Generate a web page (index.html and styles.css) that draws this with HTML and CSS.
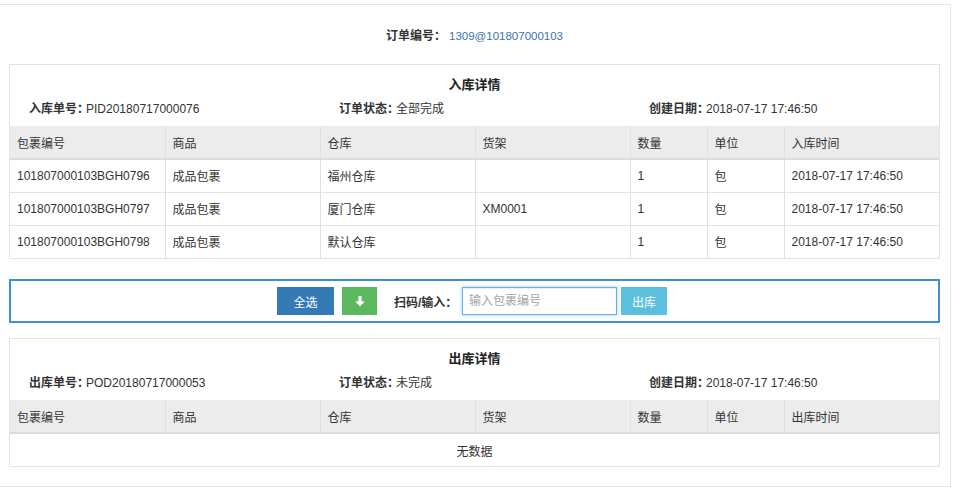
FILE: index.html
```html
<!DOCTYPE html>
<html lang="zh-CN">
<head>
<meta charset="utf-8">
<title>订单详情</title>
<link rel="stylesheet" href="styles.css">
</head>
<body>
<div class="page">
  <div class="order"><b>订单编号：</b><span class="order-no">1309@101807000103</span></div>

  <section class="panel">
    <h3 class="panel-title">入库详情</h3>
    <div class="info">
      <div><b>入库单号：</b>PID20180717000076</div>
      <div><b>订单状态：</b>全部完成</div>
      <div><b>创建日期：</b>2018-07-17 17:46:50</div>
    </div>
    <table class="grid">
      <colgroup><col class="w2"><col class="w2"><col class="w2"><col class="w2"><col class="w1"><col class="w1"><col class="w2"></colgroup>
      <thead>
        <tr><th>包裹编号</th><th>商品</th><th>仓库</th><th>货架</th><th>数量</th><th>单位</th><th>入库时间</th></tr>
      </thead>
      <tbody>
        <tr><td>101807000103BGH0796</td><td>成品包裹</td><td>福州仓库</td><td></td><td>1</td><td>包</td><td>2018-07-17 17:46:50</td></tr>
        <tr><td>101807000103BGH0797</td><td>成品包裹</td><td>厦门仓库</td><td>XM0001</td><td>1</td><td>包</td><td>2018-07-17 17:46:50</td></tr>
        <tr><td>101807000103BGH0798</td><td>成品包裹</td><td>默认仓库</td><td></td><td>1</td><td>包</td><td>2018-07-17 17:46:50</td></tr>
      </tbody>
    </table>
  </section>

  <div class="actions">
    <button class="btn btn-primary btn-all">全选</button>
    <button class="btn btn-success btn-down" aria-label="下载">
      <svg width="10" height="11" viewBox="0 0 10 11"><path d="M3.4 0h3.2v5.6h3.2L5 10.6 0.2 5.6h3.2z" fill="#fff"/></svg>
    </button>
    <label class="scan-label" for="scan">扫码/输入：</label>
    <input id="scan" class="scan-input" type="text" placeholder="输入包裹编号">
    <button class="btn btn-info btn-out">出库</button>
  </div>

  <section class="panel">
    <h3 class="panel-title">出库详情</h3>
    <div class="info">
      <div><b>出库单号：</b>POD20180717000053</div>
      <div><b>订单状态：</b>未完成</div>
      <div><b>创建日期：</b>2018-07-17 17:46:50</div>
    </div>
    <table class="grid">
      <colgroup><col class="w2"><col class="w2"><col class="w2"><col class="w2"><col class="w1"><col class="w1"><col class="w2"></colgroup>
      <thead>
        <tr><th>包裹编号</th><th>商品</th><th>仓库</th><th>货架</th><th>数量</th><th>单位</th><th>出库时间</th></tr>
      </thead>
      <tbody>
        <tr><td colspan="7" class="empty">无数据</td></tr>
      </tbody>
    </table>
  </section>
</div>
</body>
</html>
```

FILE: styles.css
```css
* { box-sizing: border-box; }

html, body {
  margin: 0;
  padding: 0;
  background: #fff;
}

body {
  font-family: "Liberation Sans", "Noto Sans CJK SC", sans-serif;
  font-size: 12px;
  color: #333;
}

.page {
  margin: 4px 0 0 -1px;
  width: 952px;
  border: 1px solid #e6e6e6;
  padding: 0 10px 19px 9px;
}

.order {
  padding: 22px 0 19px;
  line-height: 18px;
  text-align: center;
  font-size: 12px;
}

.order b {
  font-weight: bold;
  color: #333;
  margin-right: 3px;
}

.order-no {
  color: #3a72b0;
  font-size: 11.5px;
}

.panel {
  width: 931px;
  border: 1px solid #e3e3e3;
  background: #fff;
}

.panel-title {
  margin: 0;
  padding-top: 10px;
  line-height: 20px;
  font-size: 13px;
  font-weight: bold;
  text-align: center;
  color: #222;
}

.info {
  display: grid;
  grid-template-columns: 310px 310px 309px;
  margin-top: 4px;
  line-height: 20px;
}

.info > div {
  padding-left: 19px;
}

.info b {
  font-weight: bold;
  margin-right: -3px;
}

.grid {
  width: 929px;
  margin-top: 7px;
  border-collapse: collapse;
  table-layout: fixed;
}

.grid col.w2 { width: 155px; }
.grid col.w1 { width: 77px; }

.grid th,
.grid td {
  text-align: left;
  font-weight: normal;
  padding: 0 7px;
  border-left: 1px solid #e0e0e0;
  white-space: nowrap;
  overflow: hidden;
}

.grid th:first-child,
.grid td:first-child {
  border-left: none;
}

.grid th {
  height: 33px;
  background: #ececec;
  border-bottom: 2px solid #dcdcdc;
  color: #333;
}

.grid td {
  height: 33px;
  border-top: 1px solid #e3e3e3;
}

.grid tbody tr:first-child td {
  border-top: none;
}

.grid td.empty {
  text-align: center;
}

.actions {
  width: 931px;
  margin: 20px 0 15px;
  height: 44px;
  border: 2px solid #3f8fd8;
  display: flex;
  align-items: center;
  justify-content: center;
  padding-right: 5px;
}

.btn {
  height: 28px;
  border: none;
  margin: 0;
  padding: 0;
  color: #fff;
  font-family: inherit;
  font-size: 12px;
  display: flex;
  align-items: center;
  justify-content: center;
  cursor: pointer;
}

.btn-primary { background: #337ab7; }
.btn-success { background: #5cb85c; }
.btn-info { background: #5bc0de; }

.btn-all { width: 57px; }
.btn-down { width: 35px; margin-left: 8px; }
.btn-out { width: 46px; margin-left: 4px; }

.scan-label {
  margin-left: 17px;
  width: 68px;
  font-weight: bold;
  color: #333;
}

.scan-input {
  width: 155px;
  height: 28px;
  border: 1px solid #66afe9;
  box-shadow: inset 0 1px 1px rgba(0,0,0,.075), 0 0 4px rgba(102,175,233,.6);
  padding: 0 6px;
  font-family: inherit;
  font-size: 12px;
  color: #555;
  outline: none;
}

.scan-input::placeholder {
  color: #a5a5a5;
}
```
